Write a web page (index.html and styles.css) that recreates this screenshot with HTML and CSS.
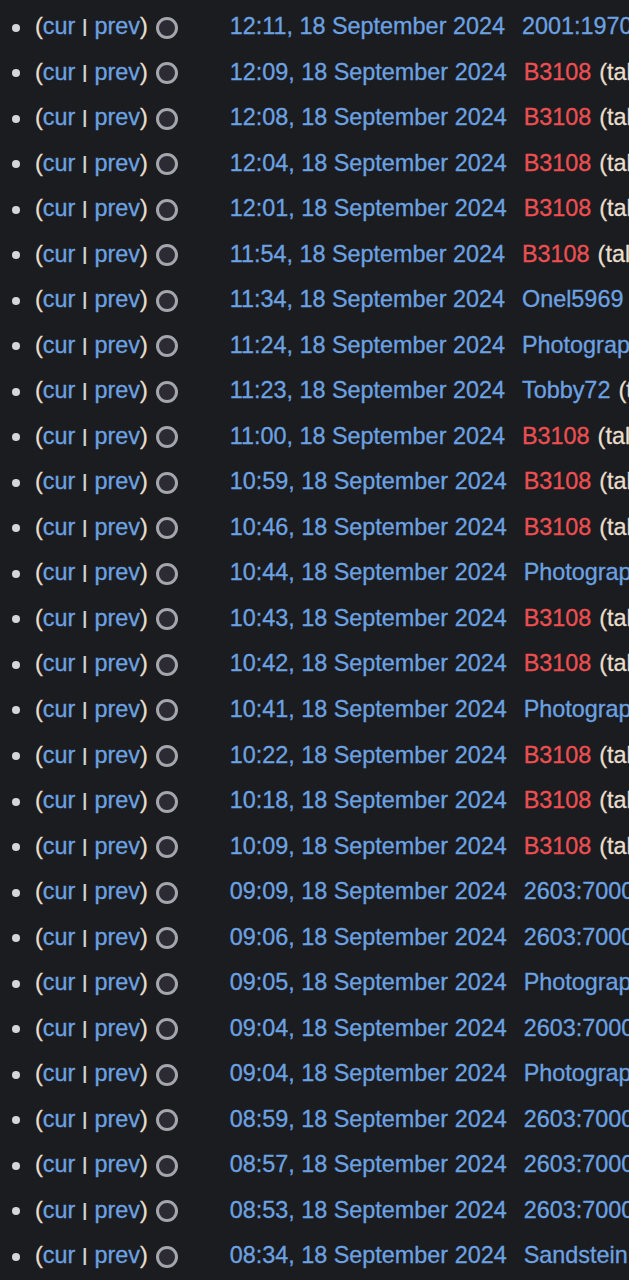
FILE: index.html
```html
<!DOCTYPE html>
<html>
<head>
<meta charset="utf-8">
<link rel="stylesheet" href="styles.css">
</head>
<body>
<ul class="history">
<li class="row"><span class="links">(<a class="lk">cur</a> <span class="sep">|</span> <a class="lk">prev</a>)</span><span class="radio"></span><a class="ts">12:11, 18 September 2024</a><a class="user">2001:1970:4a1b:5000::</a></li>
<li class="row"><span class="links">(<a class="lk">cur</a> <span class="sep">|</span> <a class="lk">prev</a>)</span><span class="radio"></span><a class="ts">12:09, 18 September 2024</a><a class="user red">B3108</a><span class="paren">(talk | contribs)</span></li>
<li class="row"><span class="links">(<a class="lk">cur</a> <span class="sep">|</span> <a class="lk">prev</a>)</span><span class="radio"></span><a class="ts">12:08, 18 September 2024</a><a class="user red">B3108</a><span class="paren">(talk | contribs)</span></li>
<li class="row"><span class="links">(<a class="lk">cur</a> <span class="sep">|</span> <a class="lk">prev</a>)</span><span class="radio"></span><a class="ts">12:04, 18 September 2024</a><a class="user red">B3108</a><span class="paren">(talk | contribs)</span></li>
<li class="row"><span class="links">(<a class="lk">cur</a> <span class="sep">|</span> <a class="lk">prev</a>)</span><span class="radio"></span><a class="ts">12:01, 18 September 2024</a><a class="user red">B3108</a><span class="paren">(talk | contribs)</span></li>
<li class="row"><span class="links">(<a class="lk">cur</a> <span class="sep">|</span> <a class="lk">prev</a>)</span><span class="radio"></span><a class="ts">11:54, 18 September 2024</a><a class="user red">B3108</a><span class="paren">(talk | contribs)</span></li>
<li class="row"><span class="links">(<a class="lk">cur</a> <span class="sep">|</span> <a class="lk">prev</a>)</span><span class="radio"></span><a class="ts">11:34, 18 September 2024</a><a class="user">Onel5969</a><span class="paren">(talk | contribs)</span></li>
<li class="row"><span class="links">(<a class="lk">cur</a> <span class="sep">|</span> <a class="lk">prev</a>)</span><span class="radio"></span><a class="ts">11:24, 18 September 2024</a><a class="user">Photographer</a><span class="paren">(talk | contribs)</span></li>
<li class="row"><span class="links">(<a class="lk">cur</a> <span class="sep">|</span> <a class="lk">prev</a>)</span><span class="radio"></span><a class="ts">11:23, 18 September 2024</a><a class="user">Tobby72</a><span class="paren">(talk | contribs)</span></li>
<li class="row"><span class="links">(<a class="lk">cur</a> <span class="sep">|</span> <a class="lk">prev</a>)</span><span class="radio"></span><a class="ts">11:00, 18 September 2024</a><a class="user red">B3108</a><span class="paren">(talk | contribs)</span></li>
<li class="row"><span class="links">(<a class="lk">cur</a> <span class="sep">|</span> <a class="lk">prev</a>)</span><span class="radio"></span><a class="ts">10:59, 18 September 2024</a><a class="user red">B3108</a><span class="paren">(talk | contribs)</span></li>
<li class="row"><span class="links">(<a class="lk">cur</a> <span class="sep">|</span> <a class="lk">prev</a>)</span><span class="radio"></span><a class="ts">10:46, 18 September 2024</a><a class="user red">B3108</a><span class="paren">(talk | contribs)</span></li>
<li class="row"><span class="links">(<a class="lk">cur</a> <span class="sep">|</span> <a class="lk">prev</a>)</span><span class="radio"></span><a class="ts">10:44, 18 September 2024</a><a class="user">Photographer</a><span class="paren">(talk | contribs)</span></li>
<li class="row"><span class="links">(<a class="lk">cur</a> <span class="sep">|</span> <a class="lk">prev</a>)</span><span class="radio"></span><a class="ts">10:43, 18 September 2024</a><a class="user red">B3108</a><span class="paren">(talk | contribs)</span></li>
<li class="row"><span class="links">(<a class="lk">cur</a> <span class="sep">|</span> <a class="lk">prev</a>)</span><span class="radio"></span><a class="ts">10:42, 18 September 2024</a><a class="user red">B3108</a><span class="paren">(talk | contribs)</span></li>
<li class="row"><span class="links">(<a class="lk">cur</a> <span class="sep">|</span> <a class="lk">prev</a>)</span><span class="radio"></span><a class="ts">10:41, 18 September 2024</a><a class="user">Photographer</a><span class="paren">(talk | contribs)</span></li>
<li class="row"><span class="links">(<a class="lk">cur</a> <span class="sep">|</span> <a class="lk">prev</a>)</span><span class="radio"></span><a class="ts">10:22, 18 September 2024</a><a class="user red">B3108</a><span class="paren">(talk | contribs)</span></li>
<li class="row"><span class="links">(<a class="lk">cur</a> <span class="sep">|</span> <a class="lk">prev</a>)</span><span class="radio"></span><a class="ts">10:18, 18 September 2024</a><a class="user red">B3108</a><span class="paren">(talk | contribs)</span></li>
<li class="row"><span class="links">(<a class="lk">cur</a> <span class="sep">|</span> <a class="lk">prev</a>)</span><span class="radio"></span><a class="ts">10:09, 18 September 2024</a><a class="user red">B3108</a><span class="paren">(talk | contribs)</span></li>
<li class="row"><span class="links">(<a class="lk">cur</a> <span class="sep">|</span> <a class="lk">prev</a>)</span><span class="radio"></span><a class="ts">09:09, 18 September 2024</a><a class="user">2603:7000:3900:7690::</a></li>
<li class="row"><span class="links">(<a class="lk">cur</a> <span class="sep">|</span> <a class="lk">prev</a>)</span><span class="radio"></span><a class="ts">09:06, 18 September 2024</a><a class="user">2603:7000:3900:7690::</a></li>
<li class="row"><span class="links">(<a class="lk">cur</a> <span class="sep">|</span> <a class="lk">prev</a>)</span><span class="radio"></span><a class="ts">09:05, 18 September 2024</a><a class="user">Photographer</a><span class="paren">(talk | contribs)</span></li>
<li class="row"><span class="links">(<a class="lk">cur</a> <span class="sep">|</span> <a class="lk">prev</a>)</span><span class="radio"></span><a class="ts">09:04, 18 September 2024</a><a class="user">2603:7000:3900:7690::</a></li>
<li class="row"><span class="links">(<a class="lk">cur</a> <span class="sep">|</span> <a class="lk">prev</a>)</span><span class="radio"></span><a class="ts">09:04, 18 September 2024</a><a class="user">Photographer</a><span class="paren">(talk | contribs)</span></li>
<li class="row"><span class="links">(<a class="lk">cur</a> <span class="sep">|</span> <a class="lk">prev</a>)</span><span class="radio"></span><a class="ts">08:59, 18 September 2024</a><a class="user">2603:7000:3900:7690::</a></li>
<li class="row"><span class="links">(<a class="lk">cur</a> <span class="sep">|</span> <a class="lk">prev</a>)</span><span class="radio"></span><a class="ts">08:57, 18 September 2024</a><a class="user">2603:7000:3900:7690::</a></li>
<li class="row"><span class="links">(<a class="lk">cur</a> <span class="sep">|</span> <a class="lk">prev</a>)</span><span class="radio"></span><a class="ts">08:53, 18 September 2024</a><a class="user">2603:7000:3900:7690::</a></li>
<li class="row"><span class="links">(<a class="lk">cur</a> <span class="sep">|</span> <a class="lk">prev</a>)</span><span class="radio"></span><a class="ts">08:34, 18 September 2024</a><a class="user">Sandstein</a><span class="paren">(talk | contribs)</span></li>
</ul>
</body>
</html>
```
FILE: styles.css
```css
html, body {
  margin: 0;
  padding: 0;
  background: #1b1c1f;
  overflow: hidden;
}
body {
  width: 629px;
  height: 1280px;
  font-family: "Liberation Sans", Arial, sans-serif;
  font-size: 23.4px;
  color: #e8dfcc;
  -webkit-text-stroke: 0.3px currentColor;
}
.history {
  list-style: none;
  margin: 0;
  padding: 4px 0 0 0;
}
.row {
  display: flex;
  align-items: center;
  height: 45.52px;
  white-space: nowrap;
  position: relative;
  padding-left: 35px;
}
.row::before {
  content: "";
  position: absolute;
  left: 12px;
  top: 50%;
  width: 8px;
  height: 8px;
  margin-top: -3px;
  border-radius: 50%;
  background: #d4d6da;
}
.links {
  color: #e8dfcc;
}
.lk {
  color: #6ca2e2;
}
.sep {
  display: inline-block;
  color: #d8d8d8;
  transform: translateY(-1px) scaleY(0.82);
}
.radio {
  flex: none;
  width: 16px;
  height: 16px;
  margin-left: 8px;
  margin-top: 2px;
  border: 3px solid #a3a7ad;
  border-radius: 50%;
  background: #2c2b34;
}
.ts {
  color: #6ca2e2;
  margin-left: 52px;
}
.user {
  color: #6ca2e2;
  margin-left: 17px;
}
.user.red {
  color: #ec4f52;
}
.paren {
  color: #e8dfcc;
  margin-left: 8px;
}
```
